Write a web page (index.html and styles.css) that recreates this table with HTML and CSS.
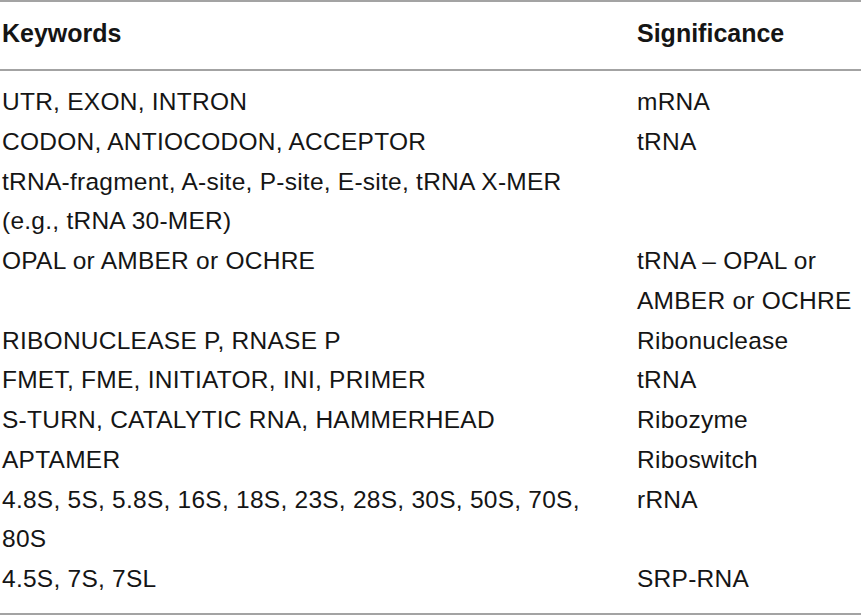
FILE: index.html
```html
<!DOCTYPE html>
<html>
<head>
<meta charset="utf-8">
<link rel="stylesheet" href="styles.css">
</head>
<body>
<table class="kw-table">
  <thead>
    <tr>
      <th class="col-kw">Keywords</th>
      <th class="col-sig">Significance</th>
    </tr>
  </thead>
  <tbody>
    <tr class="first"><td>UTR, EXON, INTRON</td><td>mRNA</td></tr>
    <tr><td>CODON, ANTIOCODON, ACCEPTOR</td><td>tRNA</td></tr>
    <tr><td>tRNA-fragment, A-site, P-site, E-site, tRNA X-MER<br>(e.g., tRNA 30-MER)</td><td></td></tr>
    <tr><td>OPAL or AMBER or OCHRE</td><td>tRNA – OPAL or<br>AMBER or OCHRE</td></tr>
    <tr><td>RIBONUCLEASE P, RNASE P</td><td>Ribonuclease</td></tr>
    <tr><td>FMET, FME, INITIATOR, INI, PRIMER</td><td>tRNA</td></tr>
    <tr><td>S-TURN, CATALYTIC RNA, HAMMERHEAD</td><td>Ribozyme</td></tr>
    <tr><td>APTAMER</td><td>Riboswitch</td></tr>
    <tr><td>4.8S, 5S, 5.8S, 16S, 18S, 23S, 28S, 30S, 50S, 70S,<br>80S</td><td>rRNA</td></tr>
    <tr class="last"><td>4.5S, 7S, 7SL</td><td>SRP-RNA</td></tr>
  </tbody>
</table>
</body>
</html>
```

FILE: styles.css
```css
html, body {
  margin: 0;
  padding: 0;
  background: #ffffff;
}

.kw-table {
  width: 861px;
  border-collapse: collapse;
  font-family: "Liberation Sans", Arial, sans-serif;
  color: #151515;
  border-top: 2px solid #a3a3a3;
  border-bottom: 2px solid #a3a3a3;
}

.kw-table th,
.kw-table td {
  padding: 0 0 0 2px;
  text-align: left;
  vertical-align: top;
  white-space: nowrap;
}

.kw-table th {
  font-size: 25px;
  font-weight: bold;
  line-height: 40px;
  padding-top: 11px;
  padding-bottom: 16px;
  border-bottom: 2px solid #a3a3a3;
}

.kw-table .col-kw {
  width: 633px;
}

.kw-table td {
  font-size: 24.5px;
  letter-spacing: 0.25px;
  line-height: 39.75px;
}

.kw-table .first td {
  padding-top: 11px;
}

.kw-table .last td {
  padding-bottom: 14px;
}
```
